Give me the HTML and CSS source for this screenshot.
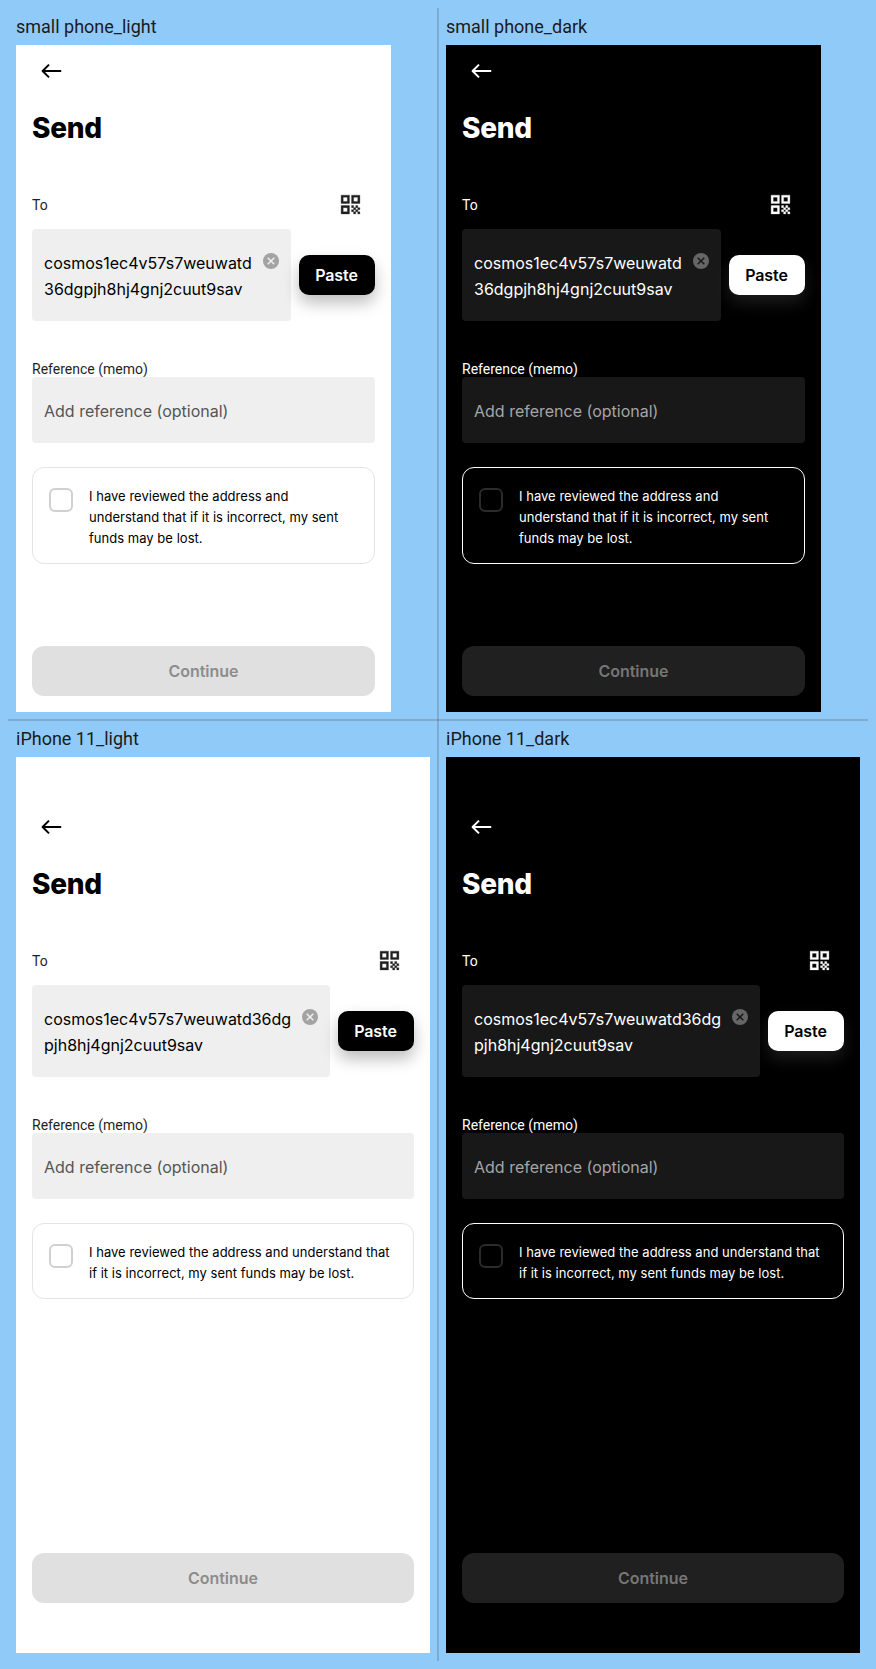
FILE: index.html
```
<!DOCTYPE html>
<html lang="en">
<head>
<meta charset="utf-8">
<title>Send</title>
<link rel="stylesheet" href="styles.css">
</head>
<body>
<svg class="defs" aria-hidden="true">
  <symbol id="arrow" viewBox="0 0 24 24"><path d="M22.2 12H3.6M10 5.6 3.6 12l6.4 6.4" fill="none" stroke="currentColor" stroke-width="2" stroke-linejoin="round"/></symbol>
  <symbol id="qr" viewBox="0 0 24 24"><path fill="currentColor" stroke="currentColor" stroke-width="0.3" fill-rule="evenodd" d="M3 3h8v8H3zM5 5v4h4V5zM13 3h8v8h-8zM15 5v4h4V5zM3 13h8v8H3zM5 15v4h4v-4zM13 13h2v2h-2zM15 15h2v2h-2zM13 17h2v2h-2zM15 19h2v2h-2zM17 17h2v2h-2zM17 13h2v2h-2zM19 15h2v2h-2zM19 19h2v2h-2z"/></symbol>
  <symbol id="clear" viewBox="0 0 16 16"><circle cx="8" cy="8" r="8" fill="currentColor"/><path d="m4.7 4.7 6.6 6.6M11.3 4.7l-6.6 6.6" fill="none" stroke="var(--field)" stroke-width="1.5"/></symbol>
</svg>
<main class="board">
  <section class="cell">
    <h2 class="name">small phone_light</h2>
    <div class="phone small light">
      <div class="nav"><svg><use href="#arrow"/></svg></div>
      <h1 class="title">Send</h1>
      <div class="label-row"><span class="label">To</span><svg class="qr"><use href="#qr"/></svg></div>
      <div class="to-row"><div class="field address"><p>cosmos1ec4v57s7weuwatd<br>36dgpjh8hj4gnj2cuut9sav</p><svg><use href="#clear"/></svg></div><button class="paste">Paste</button></div>
      <div class="label memo-label">Reference (memo)</div>
      <div class="field memo">Add reference (optional)</div>
      <div class="review"><span class="check"></span><p>I have reviewed the address and<br>understand that if it is incorrect, my sent<br>funds may be lost.</p></div>
      <button class="continue">Continue</button>
    </div>
  </section>
  <section class="cell right">
    <h2 class="name">small phone_dark</h2>
    <div class="phone small dark">
      <div class="nav"><svg><use href="#arrow"/></svg></div>
      <h1 class="title">Send</h1>
      <div class="label-row"><span class="label">To</span><svg class="qr"><use href="#qr"/></svg></div>
      <div class="to-row"><div class="field address"><p>cosmos1ec4v57s7weuwatd<br>36dgpjh8hj4gnj2cuut9sav</p><svg><use href="#clear"/></svg></div><button class="paste">Paste</button></div>
      <div class="label memo-label">Reference (memo)</div>
      <div class="field memo">Add reference (optional)</div>
      <div class="review"><span class="check"></span><p>I have reviewed the address and<br>understand that if it is incorrect, my sent<br>funds may be lost.</p></div>
      <button class="continue">Continue</button>
    </div>
  </section>
  <section class="cell">
    <h2 class="name">iPhone 11_light</h2>
    <div class="phone large light">
      <div class="nav"><svg><use href="#arrow"/></svg></div>
      <h1 class="title">Send</h1>
      <div class="label-row"><span class="label">To</span><svg class="qr"><use href="#qr"/></svg></div>
      <div class="to-row"><div class="field address"><p>cosmos1ec4v57s7weuwatd36dg<br>pjh8hj4gnj2cuut9sav</p><svg><use href="#clear"/></svg></div><button class="paste">Paste</button></div>
      <div class="label memo-label">Reference (memo)</div>
      <div class="field memo">Add reference (optional)</div>
      <div class="review"><span class="check"></span><p>I have reviewed the address and understand that<br>if it is incorrect, my sent funds may be lost.</p></div>
      <button class="continue">Continue</button>
    </div>
  </section>
  <section class="cell right">
    <h2 class="name">iPhone 11_dark</h2>
    <div class="phone large dark">
      <div class="nav"><svg><use href="#arrow"/></svg></div>
      <h1 class="title">Send</h1>
      <div class="label-row"><span class="label">To</span><svg class="qr"><use href="#qr"/></svg></div>
      <div class="to-row"><div class="field address"><p>cosmos1ec4v57s7weuwatd36dg<br>pjh8hj4gnj2cuut9sav</p><svg><use href="#clear"/></svg></div><button class="paste">Paste</button></div>
      <div class="label memo-label">Reference (memo)</div>
      <div class="field memo">Add reference (optional)</div>
      <div class="review"><span class="check"></span><p>I have reviewed the address and understand that<br>if it is incorrect, my sent funds may be lost.</p></div>
      <button class="continue">Continue</button>
    </div>
  </section>
</main>
</body>
</html>
```
FILE: styles.css
```
* { box-sizing: border-box; }
body { margin: 0; background: #90caf9; font-family: Inter, sans-serif; }
h1, h2, p { margin: 0; }
.defs { display: none; }
.board {
  position: relative;
  width: 876px;
  height: 1669px;
  padding: 8px;
  display: grid;
  grid-template-columns: 430px 430px;
  grid-template-rows: 712px 941px;
}
.board::before, .board::after { content: ""; position: absolute; background: rgba(66, 66, 66, 0.22); }
.board::before { left: 437px; top: 8px; width: 2px; height: 1653px; }
.board::after { left: 8px; top: 719px; width: 860px; height: 2px; }
.cell { padding: 8px; }
.name {
  height: 29px;
  font: 400 18px/21px Roboto, sans-serif;
  color: #1b1b1b;
  white-space: nowrap;
}
.phone {
  display: flex;
  flex-direction: column;
  padding: 0 16px 16px;
  background: var(--bg);
  color: var(--fg);
}
.small { width: 375px; height: 667px; }
.large { width: 414px; height: 896px; padding-top: 44px; padding-bottom: 50px; }
.light {
  --bg: #fff; --fg: #000; --soft: #1f1f1f; --field: #efefef; --hint: #555; --clear: #a3a3a3;
  --line: #e4e4e4; --check: #d0d0d0; --off: #e0e0e0; --off-text: #8c8c8c; --shadow: rgba(0, 0, 0, 0.26);
}
.dark {
  --bg: #000; --fg: #fff; --soft: #fff; --field: #181818; --hint: #a5a5a5; --clear: #666;
  --line: #fff; --check: #2b2b2b; --off: #202020; --off-text: #767676; --shadow: rgba(255, 255, 255, 0.11);
}
.nav { height: 52px; padding: 14px 0 0 7px; color: var(--fg); }
.nav svg { display: block; width: 24px; height: 24px; }
.title { height: 96px; padding-top: 14px; font-size: 28px; line-height: 34px; font-weight: 800; letter-spacing: -0.3px; }
.label { font: 400 14px/16px Roboto, sans-serif; color: var(--soft); }
.label-row { height: 36px; padding-right: 12px; display: flex; justify-content: space-between; }
.label-row .label { padding-top: 4px; }
.qr { width: 25px; height: 25px; margin-top: -1px; color: var(--soft); }
.to-row { display: flex; align-items: center; gap: 8px; }
.field { background: var(--field); border-radius: 4px; font-size: 16px; }
.address { flex: 1; height: 92px; padding: 21px 12px; display: flex; justify-content: space-between; line-height: 26px; white-space: nowrap; }
.address svg { flex: none; width: 16px; height: 16px; margin-top: 3px; color: var(--clear); }
.paste {
  width: 76px; height: 40px; padding: 0 1px 0 0; border: 0; border-radius: 10px;
  background: var(--fg); color: var(--bg);
  font: 600 16px Inter, sans-serif; letter-spacing: -0.1px;
  box-shadow: 0 8px 16px var(--shadow);
}
.memo-label { height: 16px; margin-top: 40px; }
.memo { height: 66px; padding: 20px 12px; line-height: 28px; color: var(--hint); }
.review {
  display: flex; gap: 16px; margin-top: 24px; padding: 18px 16px 14px;
  border: 1px solid var(--line); border-radius: 12px;
  font-size: 13px; line-height: 21px; letter-spacing: 0.025px; white-space: nowrap;
}
.check { flex: none; width: 24px; height: 24px; margin-top: 2px; border: 2px solid var(--check); border-radius: 6px; }
.continue {
  height: 50px; margin-top: auto; border: 0; border-radius: 12px;
  background: var(--off); color: var(--off-text); font: 600 16px Inter, sans-serif; letter-spacing: -0.05px;
}
```
